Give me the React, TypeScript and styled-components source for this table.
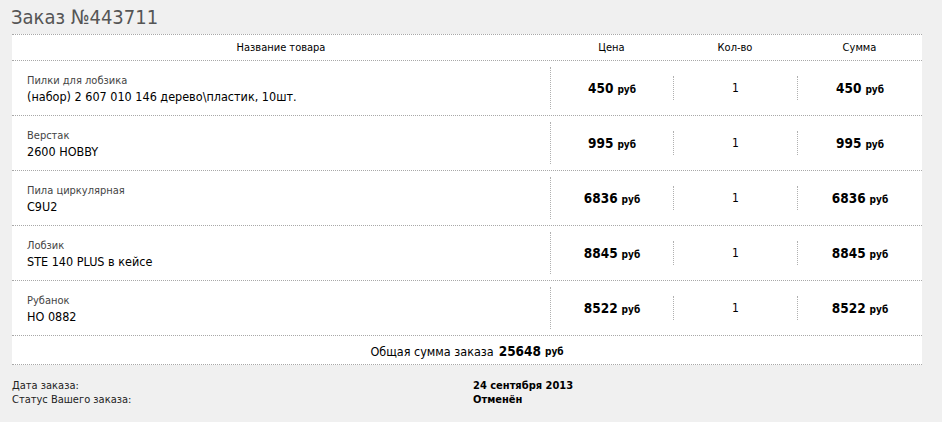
import styled, { createGlobalStyle } from "styled-components";

const GlobalStyle = createGlobalStyle`
  html, body {
    margin: 0;
    padding: 0;
    background: #f0f0f0;
  }
  body {
    font-family: "DejaVu Sans Condensed", "DejaVu Sans", sans-serif;
    color: #000;
  }
`;

const Page = styled.div`
  width: 942px;
  height: 422px;
  padding: 0 20px 0 12px;
  box-sizing: border-box;
`;

const Title = styled.h1`
  margin: 0;
  padding: 5px 0 0 0;
  height: 34px;
  box-sizing: border-box;
  font-size: 20px;
  font-weight: normal;
  line-height: 24px;
  color: #555;
  margin-left: -1px;
`;

const Table = styled.div`
  background: #fff;
  width: 910px;
  border-top: 1px dotted #a8a8a8;
`;

const Row = styled.div<{ $height: number }>`
  display: grid;
  grid-template-columns: 538px 123px 124px 125px;
  height: ${(p) => p.$height}px;
  border-bottom: 1px dotted #a8a8a8;
  box-sizing: border-box;
`;

const HeadCell = styled.div`
  display: flex;
  align-items: center;
  justify-content: center;
  font-size: 11px;
`;

const NameCell = styled.div`
  display: flex;
  flex-direction: column;
  justify-content: center;
  padding-left: 15px;
  padding-top: 1px;
`;

const Label = styled.div`
  font-size: 11px;
  color: #444;
  line-height: 15px;
`;

const Name = styled.div`
  font-size: 12.5px;
  line-height: 17px;
`;

const ValueCell = styled.div<{ $inset: number }>`
  display: flex;
  align-items: center;
  justify-content: center;
  margin: ${(p) => p.$inset}px 0;
  border-left: 1px dotted #b0b0b0;
  font-size: 12px;
`;

const Amount = styled.span`
  font-weight: bold;
  font-size: 13.5px;
`;

const Currency = styled.span`
  font-weight: bold;
  font-size: 10px;
  margin-left: 4px;
`;

const TotalRow = styled.div`
  height: 29px;
  display: flex;
  align-items: center;
  justify-content: center;
  font-size: 12.5px;
  border-bottom: 1px dotted #a8a8a8;
  box-sizing: border-box;
  padding-top: 2px;
`;

const TotalAmount = styled(Amount)`
  margin-left: 5px;
`;

const Info = styled.div`
  display: grid;
  grid-template-columns: 461px 1fr;
  padding-top: 14px;
  font-size: 11px;
  line-height: 14px;
  color: #222;
`;

const InfoValue = styled.div`
  font-weight: bold;
  color: #000;
`;

type Item = { label: string; name: string; price: number; qty: number };

const items: Item[] = [
  { label: "Пилки для лобзика", name: "(набор) 2 607 010 146 дерево\\пластик, 10шт.", price: 450, qty: 1 },
  { label: "Верстак", name: "2600 HOBBY", price: 995, qty: 1 },
  { label: "Пила циркулярная", name: "C9U2", price: 6836, qty: 1 },
  { label: "Лобзик", name: "STE 140 PLUS в кейсе", price: 8845, qty: 1 },
  { label: "Рубанок", name: "HO 0882", price: 8522, qty: 1 },
];

const Price = ({ value }: { value: number }) => (
  <span>
    <Amount>{value}</Amount>
    <Currency>руб</Currency>
  </span>
);

export default function App() {
  const total = items.reduce((s, i) => s + i.price * i.qty, 0);
  return (
    <Page>
      <GlobalStyle />
      <Title>Заказ №443711</Title>
      <Table>
        <Row $height={26}>
          <HeadCell>Название товара</HeadCell>
          <HeadCell>Цена</HeadCell>
          <HeadCell>Кол-во</HeadCell>
          <HeadCell>Сумма</HeadCell>
        </Row>
        {items.map((item) => (
          <Row $height={55} key={item.label}>
            <NameCell>
              <Label>{item.label}</Label>
              <Name>{item.name}</Name>
            </NameCell>
            <ValueCell $inset={6}>
              <Price value={item.price} />
            </ValueCell>
            <ValueCell $inset={15}>{item.qty}</ValueCell>
            <ValueCell $inset={15}>
              <Price value={item.price * item.qty} />
            </ValueCell>
          </Row>
        ))}
        <TotalRow>
          Общая сумма заказа
          <TotalAmount>{total}</TotalAmount>
          <Currency>руб</Currency>
        </TotalRow>
      </Table>
      <Info>
        <div>
          Дата заказа:
          <br />
          Статус Вашего заказа:
        </div>
        <InfoValue>
          24 сентября 2013
          <br />
          Отменён
        </InfoValue>
      </Info>
    </Page>
  );
}
